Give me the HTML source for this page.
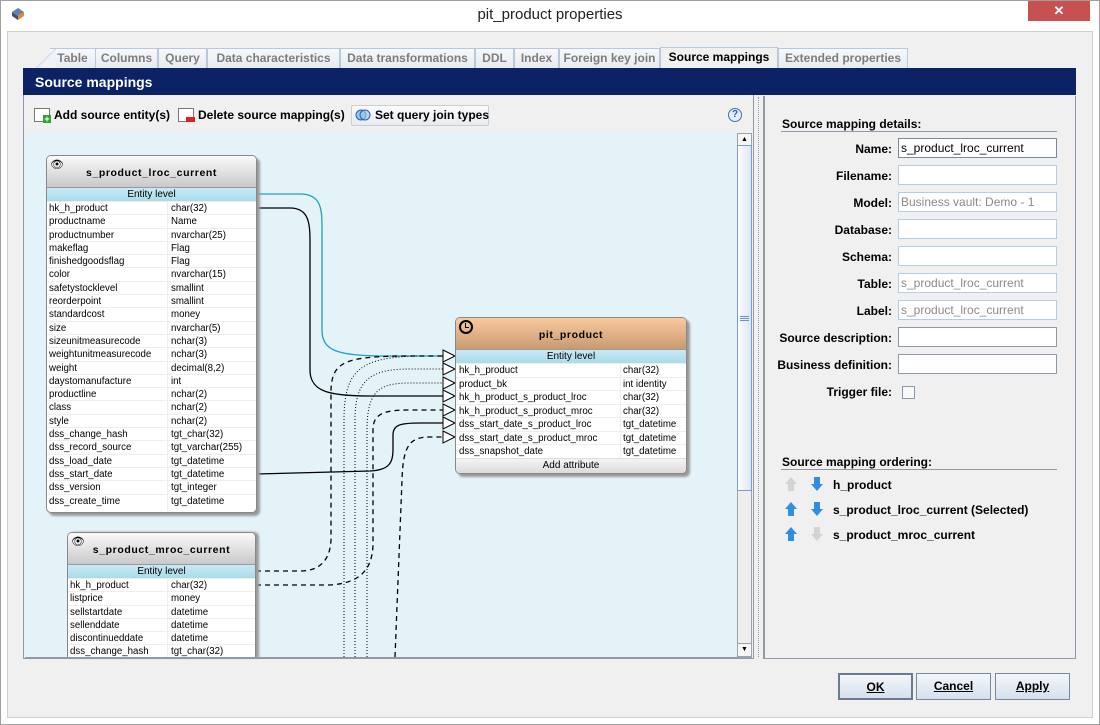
<!DOCTYPE html>
<html><head><meta charset="utf-8"><style>
*{margin:0;padding:0;box-sizing:border-box}
body{width:1100px;height:725px;position:relative;overflow:hidden;background:#fff;font-family:"Liberation Sans",sans-serif;font-size:12px;color:#000}
.a{position:absolute}
.tab{position:absolute;top:48px;height:21px;border:1px solid #b9c9dc;border-bottom:none;background:linear-gradient(#f6f8fb,#e6ebf1);color:#7d7d7d;font-weight:bold;font-size:12px;line-height:19px;text-align:center}
.ent{position:absolute;background:#fff;border:1px solid #888;border-radius:5px;box-shadow:3px 3px 2px #9a9a9a;overflow:hidden}
.eh{height:32px;background:linear-gradient(#fafafa,#c9c9c9);font-weight:bold;font-size:10.5px;text-align:center;line-height:34px;letter-spacing:0.6px;border-bottom:1px solid #999}
.el{height:13px;background:linear-gradient(#c9e9f4,#a9dbea);font-size:10px;text-align:center;line-height:13px}
.r{height:13.3px;font-size:9.7px;line-height:13px;border-top:1px solid #eee;position:relative;white-space:nowrap}
.r span{position:absolute;top:0}
.lbl{position:absolute;width:110px;text-align:right;font-weight:bold;font-size:12px}
.inp{position:absolute;left:898px;width:159px;height:20px;border:1px solid #b4cde3;background:#fff;font-size:12px;line-height:18px;padding-left:2px;color:#8a8a8a}
.btn{position:absolute;top:673px;width:75px;height:27px;border:1px solid #7a8a9c;background:linear-gradient(#f4f7fb,#d6e0ec);font-weight:bold;font-size:12px;text-align:center;line-height:25px;text-decoration:underline}
</style></head><body>
<div class="a" style="left:0;top:0;width:1100px;height:725px;border:1px solid #a0a0a0"></div>
<div class="a" style="left:10px;top:6px;width:16px;height:14px">
<svg width="16" height="14"><polygon points="2,6 8,2 14,6 8,10" fill="#6b7fa8"/><polygon points="2,6 8,10 8,14 2,10" fill="#3d4f78"/><polygon points="14,6 8,10 8,14 14,10" fill="#e08a2c"/></svg></div>
<div class="a" style="left:0;top:6px;width:1100px;text-align:center;font-size:15px;color:#222">pit_product properties</div>
<div class="a" style="left:1028px;top:1px;width:62px;height:20px;background:#c75050;color:#fff;text-align:center;font-size:13px;line-height:19px;font-weight:bold">✕</div>
<div class="a" style="left:7px;top:31px;width:1086px;height:687px;background:#f0f0f0;border:1px solid #d0d0d0"></div>

<div class="tab" style="left:50px;width:46px;border-left:none">Table</div>
<div class="a" style="left:36px;top:48px;width:20px;height:21px;background:linear-gradient(135deg,transparent 48%,#b9c9dc 50%,#eef2f7 52%)"></div>
<div class="tab" style="left:95px;width:63px">Columns</div>
<div class="tab" style="left:158px;width:49px">Query</div>
<div class="tab" style="left:207px;width:133px">Data characteristics</div>
<div class="tab" style="left:340px;width:135px">Data transformations</div>
<div class="tab" style="left:475px;width:39px">DDL</div>
<div class="tab" style="left:514px;width:45px">Index</div>
<div class="tab" style="left:559px;width:101px">Foreign key join</div>
<div class="tab" style="left:660px;width:118px;top:47px;height:22px;background:#f0f0f0;color:#000">Source mappings</div>
<div class="tab" style="left:778px;width:130px">Extended properties</div>

<div class="a" style="left:23px;top:68px;width:1053px;height:27px;background:#0b2265;color:#fff;font-weight:bold;font-size:14px;line-height:28px;padding-left:12px">Source mappings</div>

<!-- left panel -->
<div class="a" style="left:23px;top:95px;width:731px;height:564px;border:1px solid #8e9aa8;border-top:none;background:#f0f0f0"></div>
<div class="a" style="left:34px;top:108px;width:16px;height:14px;border:1px solid #777;background:#fff"></div>
<div class="a" style="left:43px;top:115px;width:8px;height:8px;background:#2ea52e;color:#fff;font-size:9px;line-height:8px;text-align:center;font-weight:bold">+</div>
<div class="a" style="left:54px;top:108px;font-weight:bold">Add source entity(s)</div>
<div class="a" style="left:178px;top:108px;width:16px;height:14px;border:1px solid #777;background:#fff"></div>
<div class="a" style="left:186px;top:117px;width:9px;height:5px;background:#d22"></div>
<div class="a" style="left:198px;top:108px;font-weight:bold">Delete source mapping(s)</div>
<div class="a" style="left:351px;top:105px;width:138px;height:21px;border:1px solid #c9ced5;border-radius:2px;background:linear-gradient(#fbfbfb,#e8ebef)"></div>
<div class="a" style="left:355px;top:109px"><svg width="16" height="12"><circle cx="6" cy="6" r="5" fill="#9cc6f0" stroke="#2a5db0"/><circle cx="10" cy="6" r="5" fill="#9cc6f0" stroke="#2a5db0" fill-opacity="0.6"/></svg></div>
<div class="a" style="left:375px;top:108px;font-weight:bold">Set query join types</div>
<div class="a" style="left:728px;top:108px;width:14px;height:14px;border-radius:50%;border:1px solid #3a6fc4;background:#e4eefb;color:#2a5db0;font-size:10px;font-weight:bold;text-align:center;line-height:12px">?</div>

<div class="a" style="left:25px;top:133px;width:712px;height:524px;background:#e4f3f8"></div>
<!-- scrollbar -->
<div class="a" style="left:737px;top:133px;width:15px;height:525px;background:#eee;border:1px solid #9aa4b0"></div>
<div class="a" style="left:737px;top:133px;width:15px;height:13px;background:#f6f6f6;border:1px solid #9aa4b0;font-size:7px;text-align:center;line-height:11px">▲</div>
<div class="a" style="left:737px;top:145px;width:15px;height:346px;border:1px solid #7b9bd6;background:linear-gradient(90deg,#fff,#dbe6f3)"></div>
<div class="a" style="left:740px;top:316px;width:9px;height:5px;border-top:1px solid #6a8fd0;border-bottom:1px solid #6a8fd0"></div>
<div class="a" style="left:740px;top:318px;width:9px;height:1px;background:#6a8fd0"></div>
<div class="a" style="left:737px;top:643px;width:15px;height:14px;background:#f6f6f6;border:1px solid #9aa4b0;font-size:7px;text-align:center;line-height:12px">▼</div>
<div class="a" style="left:758px;top:97px;width:1px;height:560px;border-left:1px dotted #999"></div>

<svg class="a" style="left:0;top:0" width="1100" height="725">
<g fill="none" stroke-width="1.3">
<path d="M257,194 H300 C322,194 322,210 322,230 V330 C322,352 340,355 380,356 H443" stroke="#1aa0c8"/>
<path d="M257,208 H290 C310,208 310,225 310,245 V370 C310,392 330,396 370,396 H443" stroke="#000"/>
<path d="M257,474 L370,471 C390,470 393,462 393,450 V435 C393,425 400,423 420,423 H443" stroke="#000"/>
<path d="M256,571 H300 C320,571 330,560 331,540 V390 C332,362 345,357 400,356 H443" stroke="#000" stroke-dasharray="5,4"/>
<path d="M256,585 H330 C360,583 372,570 373,545 V430 C373,413 385,410 410,410 H443" stroke="#000" stroke-dasharray="5,4"/>
<path d="M395,657 L402,480 C403,445 410,437 430,437 H443" stroke="#000" stroke-dasharray="5,4"/>
<path d="M344,657 V420 C344,370 360,357 420,356" stroke="#000" stroke-dasharray="1,2" stroke-width="1"/>
<path d="M355,657 V420 C355,380 370,369 410,369 H443" stroke="#000" stroke-dasharray="1,2" stroke-width="1"/>
<path d="M367,657 V430 C367,390 380,383 410,383 H443" stroke="#000" stroke-dasharray="1,2" stroke-width="1"/>
</g>
<g fill="#fff" stroke="#000" stroke-width="1">
<polygon points="443,350 455,356 443,362"/>
<polygon points="443,363 455,369 443,375"/>
<polygon points="443,377 455,383 443,389"/>
<polygon points="443,390 455,396 443,402"/>
<polygon points="443,404 455,410 443,416"/>
<polygon points="443,417 455,423 443,429"/>
<polygon points="443,431 455,437 443,443"/>
</g>
</svg>

<!-- entity 1 -->
<div class="ent" style="left:46px;top:155px;width:211px;height:358px">
<div class="a" style="left:3px;top:2px;font-size:11px">👁</div>
<div class="eh">s_product_lroc_current</div>
<div class="el">Entity level</div>
<div style="position:relative">
<div class="r"><span style="left:2px">hk_h_product</span><span style="left:124px">char(32)</span></div>
<div class="r"><span style="left:2px">productname</span><span style="left:124px">Name</span></div>
<div class="r"><span style="left:2px">productnumber</span><span style="left:124px">nvarchar(25)</span></div>
<div class="r"><span style="left:2px">makeflag</span><span style="left:124px">Flag</span></div>
<div class="r"><span style="left:2px">finishedgoodsflag</span><span style="left:124px">Flag</span></div>
<div class="r"><span style="left:2px">color</span><span style="left:124px">nvarchar(15)</span></div>
<div class="r"><span style="left:2px">safetystocklevel</span><span style="left:124px">smallint</span></div>
<div class="r"><span style="left:2px">reorderpoint</span><span style="left:124px">smallint</span></div>
<div class="r"><span style="left:2px">standardcost</span><span style="left:124px">money</span></div>
<div class="r"><span style="left:2px">size</span><span style="left:124px">nvarchar(5)</span></div>
<div class="r"><span style="left:2px">sizeunitmeasurecode</span><span style="left:124px">nchar(3)</span></div>
<div class="r"><span style="left:2px">weightunitmeasurecode</span><span style="left:124px">nchar(3)</span></div>
<div class="r"><span style="left:2px">weight</span><span style="left:124px">decimal(8,2)</span></div>
<div class="r"><span style="left:2px">daystomanufacture</span><span style="left:124px">int</span></div>
<div class="r"><span style="left:2px">productline</span><span style="left:124px">nchar(2)</span></div>
<div class="r"><span style="left:2px">class</span><span style="left:124px">nchar(2)</span></div>
<div class="r"><span style="left:2px">style</span><span style="left:124px">nchar(2)</span></div>
<div class="r"><span style="left:2px">dss_change_hash</span><span style="left:124px">tgt_char(32)</span></div>
<div class="r"><span style="left:2px">dss_record_source</span><span style="left:124px">tgt_varchar(255)</span></div>
<div class="r"><span style="left:2px">dss_load_date</span><span style="left:124px">tgt_datetime</span></div>
<div class="r"><span style="left:2px">dss_start_date</span><span style="left:124px">tgt_datetime</span></div>
<div class="r"><span style="left:2px">dss_version</span><span style="left:124px">tgt_integer</span></div>
<div class="r"><span style="left:2px">dss_create_time</span><span style="left:124px">tgt_datetime</span></div>
<div class="a" style="left:120px;top:0;width:1px;height:310px;background:#eee"></div>
</div></div>

<!-- entity 2 (clipped at canvas bottom) -->
<div class="ent" style="left:67px;top:532px;width:189px;height:126px;border-bottom:none;border-radius:5px 5px 0 0;box-shadow:3px 0 2px #9a9a9a">
<div class="a" style="left:3px;top:2px;font-size:11px">👁</div>
<div class="eh">s_product_mroc_current</div>
<div class="el">Entity level</div>
<div style="position:relative">
<div class="r"><span style="left:2px">hk_h_product</span><span style="left:103px">char(32)</span></div>
<div class="r"><span style="left:2px">listprice</span><span style="left:103px">money</span></div>
<div class="r"><span style="left:2px">sellstartdate</span><span style="left:103px">datetime</span></div>
<div class="r"><span style="left:2px">sellenddate</span><span style="left:103px">datetime</span></div>
<div class="r"><span style="left:2px">discontinueddate</span><span style="left:103px">datetime</span></div>
<div class="r"><span style="left:2px">dss_change_hash</span><span style="left:103px">tgt_char(32)</span></div>
<div class="a" style="left:99px;top:0;width:1px;height:90px;background:#eee"></div>
</div></div>
<div class="a" style="left:25px;top:657px;width:712px;height:2px;background:#8e9aa8"></div>

<!-- pit_product -->
<div class="ent" style="left:455px;top:317px;width:232px;height:157px">
<div class="a" style="left:3px;top:2px;width:14px;height:14px;border:2px solid #000;border-radius:50%"></div>
<div class="a" style="left:9px;top:5px;width:4px;height:5px;border-left:1.5px solid #000;border-bottom:1.5px solid #000"></div>
<div class="eh" style="background:linear-gradient(#f9caa0,#c99a70)">pit_product</div>
<div class="el">Entity level</div>
<div style="position:relative">
<div class="r" style="height:13.5px"><span style="left:3px">hk_h_product</span><span style="left:167px">char(32)</span></div>
<div class="r" style="height:13.5px"><span style="left:3px">product_bk</span><span style="left:167px">int identity</span></div>
<div class="r" style="height:13.5px"><span style="left:3px">hk_h_product_s_product_lroc</span><span style="left:167px">char(32)</span></div>
<div class="r" style="height:13.5px"><span style="left:3px">hk_h_product_s_product_mroc</span><span style="left:167px">char(32)</span></div>
<div class="r" style="height:13.5px"><span style="left:3px">dss_start_date_s_product_lroc</span><span style="left:167px">tgt_datetime</span></div>
<div class="r" style="height:13.5px"><span style="left:3px">dss_start_date_s_product_mroc</span><span style="left:167px">tgt_datetime</span></div>
<div class="r" style="height:13.5px"><span style="left:3px">dss_snapshot_date</span><span style="left:167px">tgt_datetime</span></div>
<div class="a" style="left:164px;top:0;width:1px;height:95px;background:#eee"></div>
</div>
<div style="height:15px;background:linear-gradient(#f4f4f4,#dcdcdc);font-size:10px;text-align:center;line-height:14px;border-top:1px solid #ddd">Add attribute</div>
</div>

<!-- right panel -->
<div class="a" style="left:763px;top:96px;width:313px;height:563px;border:1px solid #8e9aa8;border-top:none;border-left:2px solid #8e9aa8;background:#f0f0f0"></div>
<div class="a" style="left:782px;top:117px;font-weight:bold">Source mapping details:</div>
<div class="a" style="left:781px;top:131px;width:276px;height:1px;background:#8e9aa8"></div>
<div class="lbl" style="left:782px;top:142px">Name:</div>
<div class="inp" style="top:138px;border-color:#7a8a9c;color:#000">s_product_lroc_current</div>
<div class="lbl" style="left:782px;top:169px">Filename:</div>
<div class="inp" style="top:165px"></div>
<div class="lbl" style="left:782px;top:196px">Model:</div>
<div class="inp" style="top:192px">Business vault: Demo - 1</div>
<div class="lbl" style="left:782px;top:223px">Database:</div>
<div class="inp" style="top:219px"></div>
<div class="lbl" style="left:782px;top:250px">Schema:</div>
<div class="inp" style="top:246px"></div>
<div class="lbl" style="left:782px;top:277px">Table:</div>
<div class="inp" style="top:273px">s_product_lroc_current</div>
<div class="lbl" style="left:782px;top:304px">Label:</div>
<div class="inp" style="top:300px">s_product_lroc_current</div>
<div class="lbl" style="left:762px;top:331px;width:130px">Source description:</div>
<div class="inp" style="top:327px;border-color:#8a9aaa"></div>
<div class="lbl" style="left:762px;top:358px;width:130px">Business definition:</div>
<div class="inp" style="top:354px;border-color:#8a9aaa"></div>
<div class="lbl" style="left:782px;top:385px">Trigger file:</div>
<div class="a" style="left:902px;top:386px;width:13px;height:13px;border:1px solid #8a9aaa;background:#f8f8f8"></div>

<div class="a" style="left:782px;top:455px;font-weight:bold">Source mapping ordering:</div>
<div class="a" style="left:781px;top:469px;width:276px;height:1px;background:#8e9aa8"></div>
<svg class="a" style="left:784px;top:476px" width="40" height="68">
<g><path d="M7,1 L13,8 H10 V15 H4 V8 H1 Z" fill="#d3d3d3"/>
<path d="M33,15 L39,8 H36 V1 H30 V8 H27 Z" fill="#2f8ee0"/>
<path d="M7,26 L13,33 H10 V40 H4 V33 H1 Z" fill="#2f8ee0"/>
<path d="M33,40 L39,33 H36 V26 H30 V33 H27 Z" fill="#2f8ee0"/>
<path d="M7,51 L13,58 H10 V65 H4 V58 H1 Z" fill="#2f8ee0"/>
<path d="M33,65 L39,58 H36 V51 H30 V58 H27 Z" fill="#d3d3d3"/></g>
</svg>
<div class="a" style="left:833px;top:478px;font-weight:bold">h_product</div>
<div class="a" style="left:833px;top:503px;font-weight:bold">s_product_lroc_current (Selected)</div>
<div class="a" style="left:833px;top:528px;font-weight:bold">s_product_mroc_current</div>

<div class="btn" style="left:838px;border:2px solid #6b7b8f">OK</div>
<div class="btn" style="left:916px">Cancel</div>
<div class="btn" style="left:995px">Apply</div>
</body></html>
